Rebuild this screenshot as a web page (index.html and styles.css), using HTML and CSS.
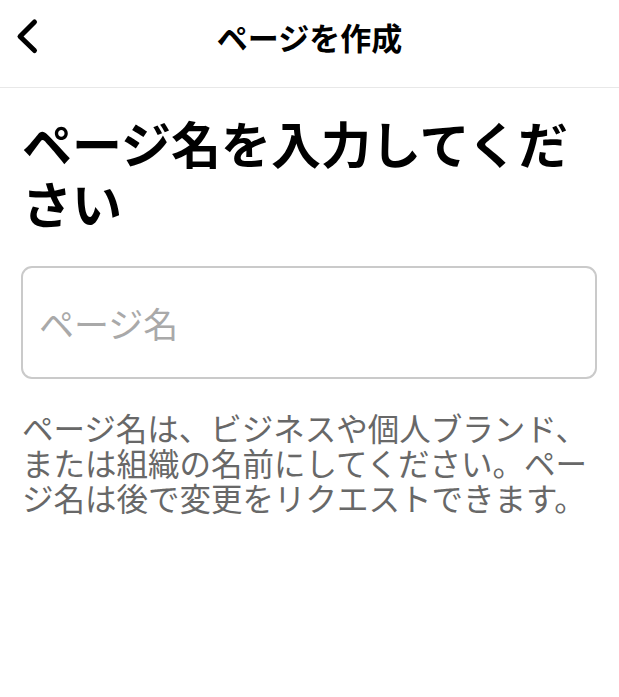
FILE: index.html
```html
<!DOCTYPE html>
<html lang="ja">
<head>
<meta charset="utf-8">
<title>ページを作成</title>
<link rel="stylesheet" href="styles.css">
</head>
<body>
<header class="topbar">
  <button class="back" aria-label="戻る">
    <svg width="40" height="40" viewBox="0 0 40 40"><polyline points="34.5,5 20,19.5 34.5,33.5" fill="none" stroke="#000" stroke-width="5" stroke-linecap="round" stroke-linejoin="round"/></svg>
  </button>
  <h1 class="title">ページを作成</h1>
  <span class="spacer"></span>
</header>
<main class="content">
  <h2 class="heading">ページ名を入力してください</h2>
  <div class="field">
    <input class="input" type="text" placeholder="ページ名">
  </div>
  <p class="help">ページ名は、ビジネスや個人ブランド、または組織の名前にしてください。ページ名は後で変更をリクエストできます。</p>
</main>
</body>
</html>
```
FILE: styles.css
```css
* { box-sizing: border-box; }
html, body {
  margin: 0;
  padding: 0;
  background: #fff;
  font-family: "Noto Sans CJK JP", "Noto Sans", sans-serif;
  color: #000;
}
.topbar {
  display: grid;
  grid-template-columns: 1fr auto 1fr;
  align-items: center;
  height: 88px;
  padding: 0 0 14px 0;
  border-bottom: 1px solid #e8e8e8;
}
.back {
  justify-self: start;
  background: none;
  border: 0;
  padding: 0;
  margin: 0;
  width: 48px;
  height: 40px;
  display: flex;
  align-items: center;
  cursor: pointer;
}
.back svg { display: block; }
.title {
  margin: 0;
  font-size: 31px;
  font-weight: 700;
  line-height: 40px;
  white-space: nowrap;
}
.content {
  padding: 24px 22px 0 22px;
}
.heading {
  margin: 0;
  font-size: 50px;
  font-weight: 700;
  line-height: 60px;
}
.field {
  margin: 34px 0 0 -1px;
}
.input {
  display: block;
  width: 100%;
  height: 113px;
  border: 2px solid #cacaca;
  border-radius: 11px;
  padding: 0 16px;
  font-family: "Noto Sans CJK JP", "Noto Sans", sans-serif;
  font-size: 35px;
  color: #000;
  background: #fff;
  outline: none;
}
.input::placeholder {
  color: #a9a9a9;
}
.help {
  margin: 31px 0 0 0;
  font-size: 31.5px;
  line-height: 35px;
  color: #686868;
}
```
